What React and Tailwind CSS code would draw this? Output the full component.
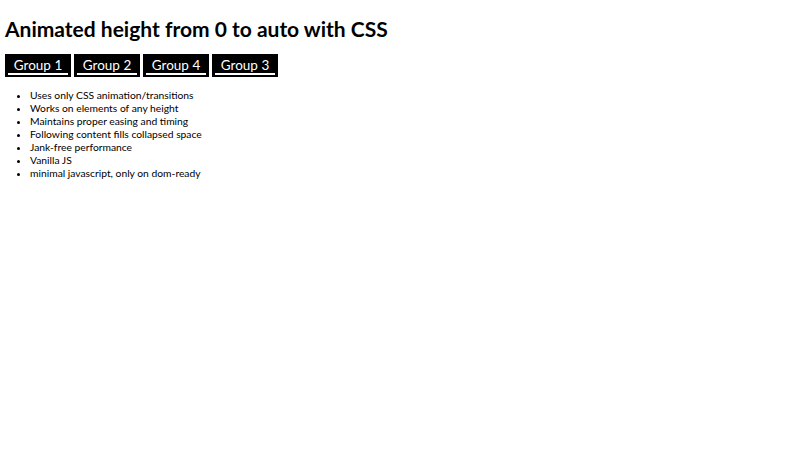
const groups = ["Group 1", "Group 2", "Group 4", "Group 3"];

const features = [
  "Uses only CSS animation/transitions",
  "Works on elements of any height",
  "Maintains proper easing and timing",
  "Following content fills collapsed space",
  "Jank-free performance",
  "Vanilla JS",
  "minimal javascript, only on dom-ready",
];

export default function App() {
  return (
    <div className="min-h-[450px] bg-white px-[5px] pt-[15px] text-black font-['Lato',sans-serif]">
      <h1 className="text-[21px] font-bold leading-[28px]">
        Animated height from 0 to auto with CSS
      </h1>

      <div className="mt-[11px] flex gap-[3px]">
        {groups.map((g) => (
          <a
            key={g}
            href="#"
            className="flex h-[23px] w-[66px] items-start bg-black px-[3px] pt-[4px]"
          >
            <span className="w-full border-b-2 border-white text-center text-[13.5px] leading-[15px] text-white">
              {g}
            </span>
          </a>
        ))}
      </div>

      <ul className="mt-[12px] list-disc pl-[25px] text-[10.3px] leading-[13px]">
        {features.map((f) => (
          <li key={f}>{f}</li>
        ))}
      </ul>
    </div>
  );
}
